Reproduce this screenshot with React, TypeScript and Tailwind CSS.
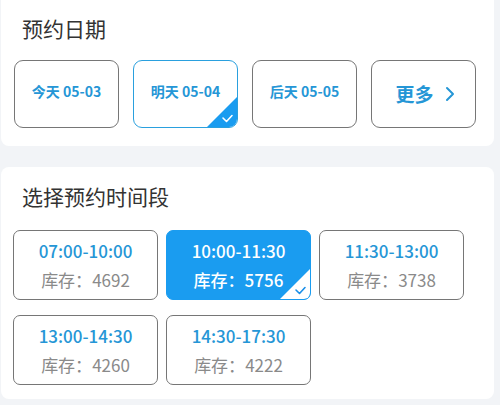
import { useState } from 'react';

const DATES = ['今天 05-03', '明天 05-04', '后天 05-05'];

const SLOTS = [
  { time: '07:00-10:00', stock: 4692 },
  { time: '10:00-11:30', stock: 5756 },
  { time: '11:30-13:00', stock: 3738 },
  { time: '13:00-14:30', stock: 4260 },
  { time: '14:30-17:30', stock: 4222 },
];

function CornerCheck({ filled }: { filled: 'blue' | 'white' }) {
  // Triangle in bottom-right corner with a small check mark
  const bg = filled === 'blue' ? '#1a9cf0' : '#ffffff';
  const fg = filled === 'blue' ? '#ffffff' : '#1a8fe8';
  return (
    <svg className="absolute right-0 bottom-0" width="30" height="30" viewBox="0 0 30 30">
      <path d="M30 0 L30 24 Q30 30 24 30 L0 30 Z" fill={bg} />
      <path d="M16 21 L19.5 24.5 L25 18.5" fill="none" stroke={fg} strokeWidth="1.6" strokeLinecap="round" strokeLinejoin="round" />
    </svg>
  );
}

export default function App() {
  const [date, setDate] = useState(1);
  const [slot, setSlot] = useState(1);

  return (
    <div
      className="w-[500px] h-[405px] bg-[#f2f4f7] overflow-hidden"
      style={{ fontFamily: '"Noto Sans CJK SC", "Noto Sans", sans-serif' }}
    >
      {/* 预约日期 */}
      <div className="ml-[1px] mr-[6px] h-[146px] bg-white rounded-b-[8px] pl-[13px] pt-[13px]">
        <h2 className="pl-[8px] text-[21px] leading-[30px] text-[#333] font-normal">预约日期</h2>
        <div className="mt-[17px] flex gap-[14px]">
          {DATES.map((d, i) => (
            <button
              key={d}
              onClick={() => setDate(i)}
              className={`relative w-[105px] h-[68px] rounded-[9px] border-[1.5px] bg-white overflow-hidden flex items-center justify-center pb-[6px] text-[14px] font-bold text-[#2596d6] ${
                date === i ? 'border-[#2aa0de]' : 'border-[#767676]'
              }`}
            >
              {d}
              {date === i && <CornerCheck filled="blue" />}
            </button>
          ))}
          <button className="w-[105px] h-[68px] rounded-[9px] border-[1.5px] border-[#767676] bg-white flex items-center justify-center gap-[10px] pl-[4px] text-[19px] font-bold text-[#2596d6]">
            更多
            <svg width="12" height="18" viewBox="0 0 12 18">
              <path d="M3 3 L9 9 L3 15" fill="none" stroke="#2596d6" strokeWidth="2" strokeLinecap="round" strokeLinejoin="round" />
            </svg>
          </button>
        </div>
      </div>

      {/* 选择预约时间段 */}
      <div className="mt-[21px] ml-[1px] mr-[6px] h-[232px] bg-white rounded-[8px] pl-[12px] pt-[14px]">
        <h2 className="pl-[9px] text-[21px] leading-[30px] text-[#333] font-normal">选择预约时间段</h2>
        <div className="mt-[19px] grid grid-cols-[145px_145px_145px] gap-x-[8px] gap-y-[15px]">
          {SLOTS.map((s, i) => {
            const active = slot === i;
            return (
              <button
                key={s.time}
                onClick={() => setSlot(i)}
                className={`relative h-[70px] rounded-[7px] overflow-hidden flex flex-col items-center justify-center leading-[29px] text-[17px] ${
                  active ? 'bg-[#1a9cf0] border-[1.5px] border-[#1a9cf0]' : 'bg-white border-[1.5px] border-[#767676]'
                }`}
              >
                <span className={`font-medium ${active ? 'text-white' : 'text-[#2596d6]'}`}>{s.time}</span>
                <span className={active ? 'text-white font-medium' : 'text-[#8a8a8a]'}>库存：{s.stock}</span>
                {active && <CornerCheck filled="white" />}
              </button>
            );
          })}
        </div>
      </div>
    </div>
  );
}
